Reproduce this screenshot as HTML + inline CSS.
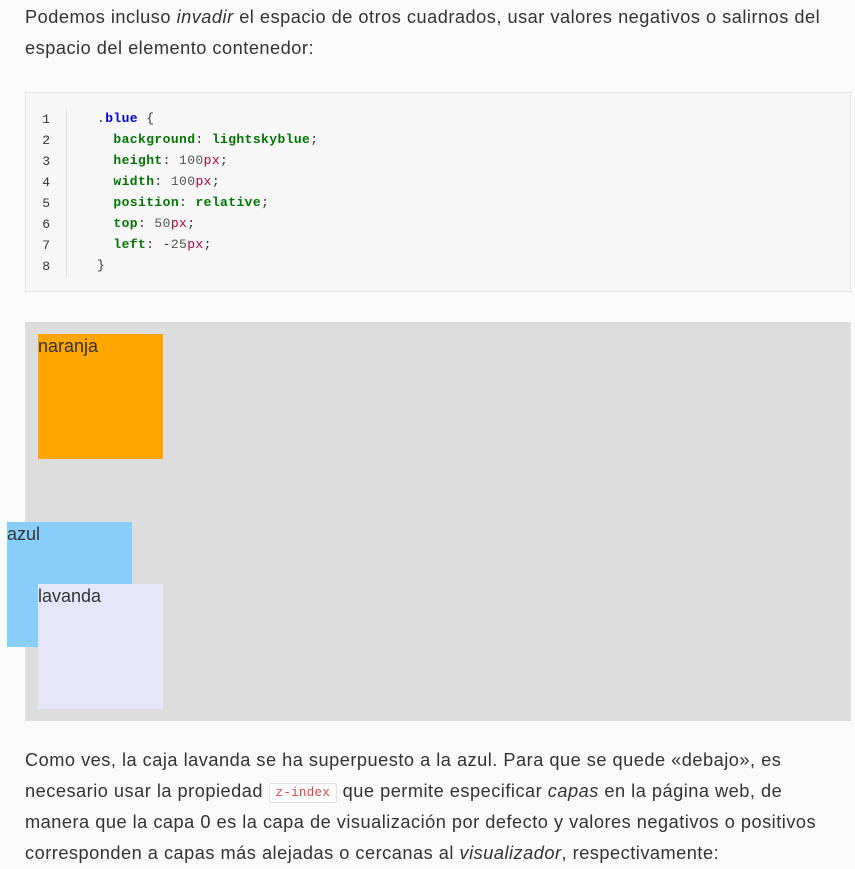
<!DOCTYPE html>
<html><head><meta charset="utf-8"><style>
body{margin:0;background:#fafafa;width:855px;height:864px;overflow:hidden;font-family:"Liberation Sans",sans-serif;color:#333;font-size:18.2px;position:relative}
p{margin:0;position:absolute;left:25px;width:830px;line-height:31px;white-space:nowrap;letter-spacing:0.5px}
.code{position:absolute;left:25px;top:92px;width:824px;height:198px;background:#f7f7f7;border:1px solid #e3e3e3}
.ln{position:absolute;left:0;top:16px;width:40px;border-right:1px solid #ddd;text-align:right}
.mono{font-family:"Liberation Mono",monospace;font-size:13px;line-height:21px}
.ln div{padding-right:16px;color:#333}
.src{position:absolute;left:71px;top:15px;white-space:pre;color:#333;letter-spacing:0.4px}
.k{color:#0000dd;font-weight:bold}.g{color:#007700;font-weight:bold}.u{color:#aa0044}.n{color:#555}
.demo{position:absolute;left:25px;top:322px;width:826px;height:399px;background:#dddddd}
.box{position:absolute;width:125px;height:125px;font-size:18px;line-height:24px}
code.z{font-family:"Liberation Mono",monospace;font-size:12.5px;line-height:14px;color:#dd4444;background:#fff;border:1px solid #e0e0e0;padding:2px 6px;border-radius:2px;display:inline-block;vertical-align:1px;letter-spacing:0.3px}
</style></head><body>
<p style="top:2px">Podemos incluso <i>invadir</i> el espacio de otros cuadrados, usar valores negativos o salirnos del<br>espacio del elemento contenedor:</p>
<div class="code">
<div class="ln mono"><div>1</div><div>2</div><div>3</div><div>4</div><div>5</div><div>6</div><div>7</div><div>8</div></div>
<div class="src mono">.<span class="k">blue</span> {
  <span class="g">background</span>: <span class="g">lightskyblue</span>;
  <span class="g">height</span>: <span class="n">100</span><span class="u">px</span>;
  <span class="g">width</span>: <span class="n">100</span><span class="u">px</span>;
  <span class="g">position</span>: <span class="g">relative</span>;
  <span class="g">top</span>: <span class="n">50</span><span class="u">px</span>;
  <span class="g">left</span>: -<span class="n">25</span><span class="u">px</span>;
}</div>
</div>
<div class="demo">
<div class="box" style="left:13px;top:12px;background:orange">naranja</div>
<div class="box" style="left:-18px;top:200px;background:lightskyblue">azul</div>
<div class="box" style="left:13px;top:262px;background:lavender">lavanda</div>
</div>
<p style="top:745px">Como ves, la caja lavanda se ha superpuesto a la azul. Para que se quede «debajo», es<br>necesario usar la propiedad <code class="z">z-index</code> que permite especificar <i>capas</i> en la página web, de<br>manera que la capa 0 es la capa de visualización por defecto y valores negativos o positivos<br>corresponden a capas más alejadas o cercanas al <i>visualizador</i>, respectivamente:</p>
</body></html>
